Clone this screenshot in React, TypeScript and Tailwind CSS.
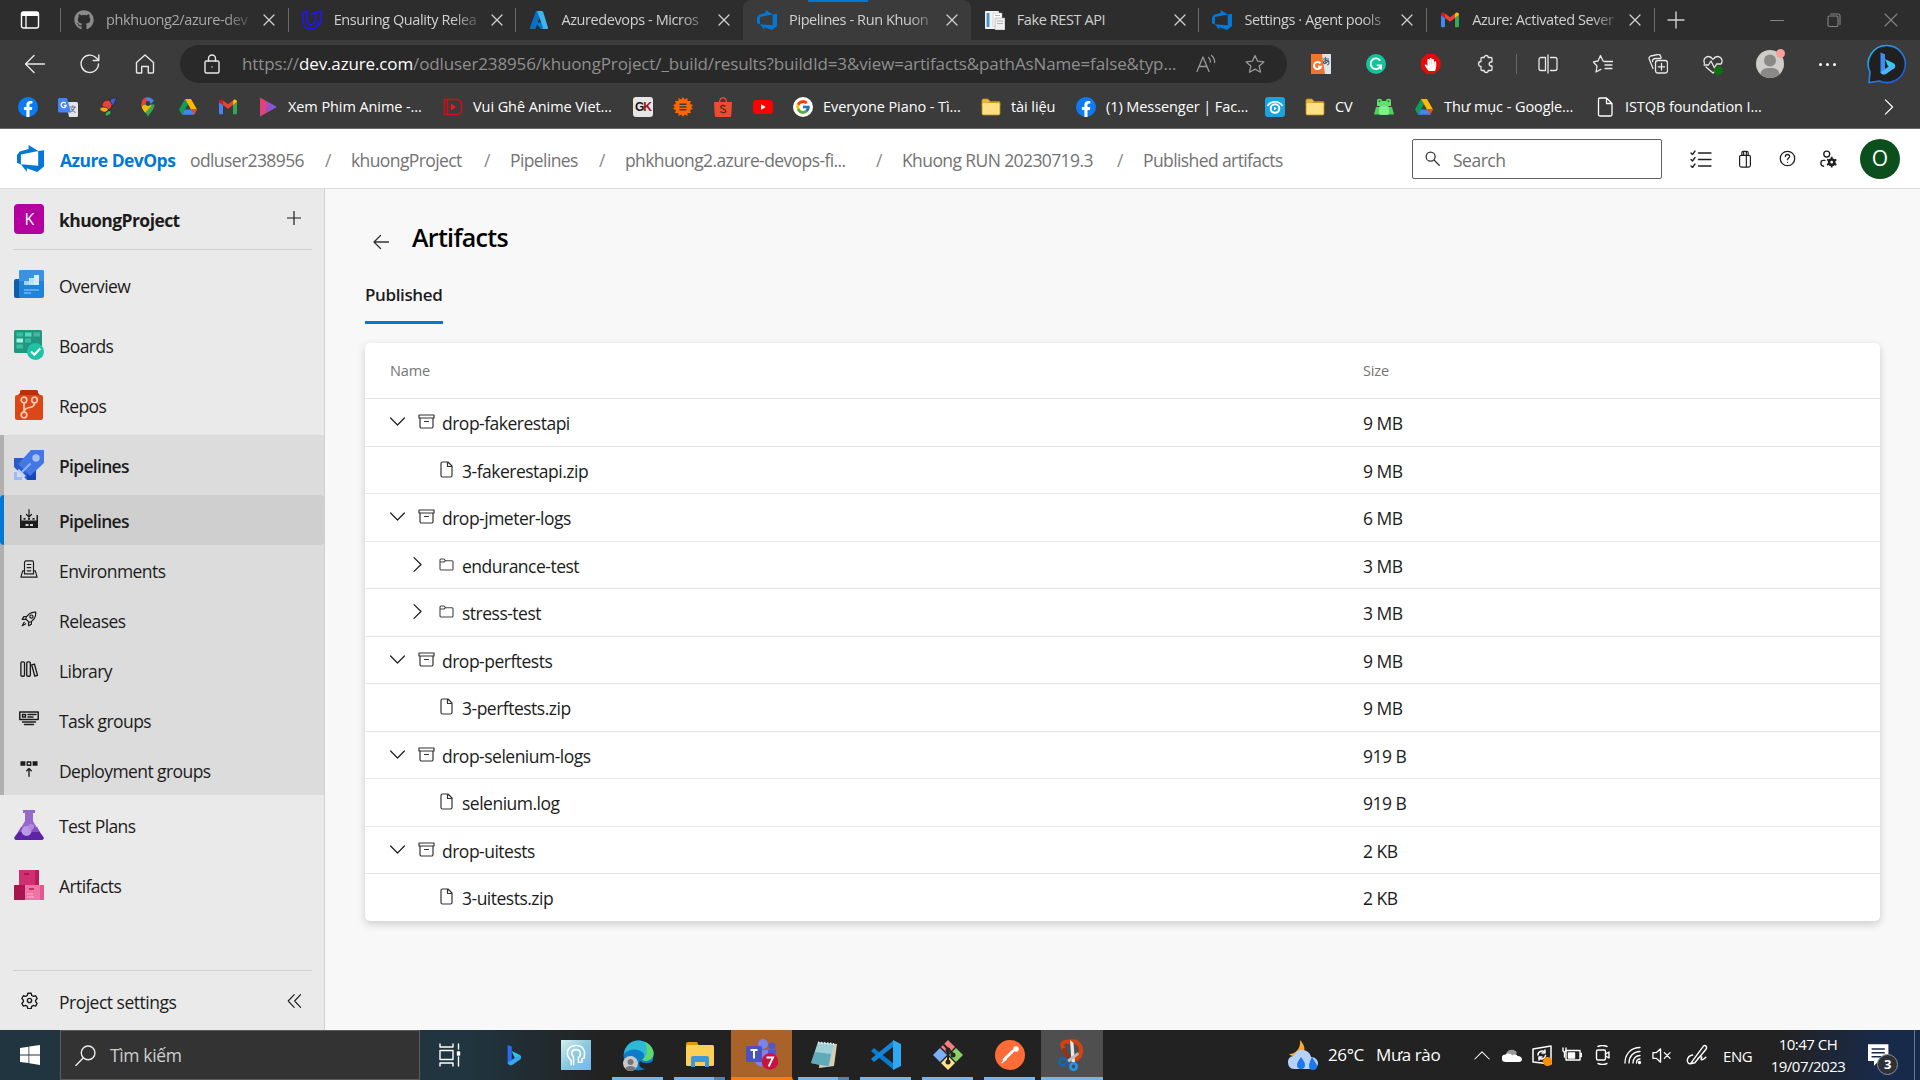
import React from 'react';
import { FaGithub, FaHandPaper } from 'react-icons/fa';
import { FcGoogle } from 'react-icons/fc';

type IconProps = { className?: string; children: React.ReactNode; box?: string; sw?: number };

function Line({ className = 'size-5', children, box = '0 0 20 20', sw = 1.3 }: IconProps) {
  return (
    <svg className={'shrink-0 ' + className} viewBox={box} fill="none" stroke="currentColor" strokeWidth={sw} strokeLinecap="round" strokeLinejoin="round">
      {children}
    </svg>
  );
}

function Art({ className = 'size-5', children, box = '0 0 20 20' }: IconProps) {
  return (
    <svg className={'shrink-0 ' + className} viewBox={box}>
      {children}
    </svg>
  );
}

/* ---------- brand marks ---------- */

const DevOps = ({ className }: { className?: string }) => (
  <Art className={className}>
    <path fill="#0078d7" d="M20 3.8v12.1l-5 4.1-7.7-2.8V20l-4.4-5.7 12.8 1V4.4L20 3.8zM15.8 4.5L8.600 0v2.900L2 4.800 0 7.400v5.800l2.900 1.200V7L15.800 4.500z" />
  </Art>
);

const Gmail = () => (
  <Art className="size-5">
    <path fill="#4285f4" d="M1 5v11a1.3 1.3 0 0 0 1.3 1.3H5V8L1 5z" />
    <path fill="#34a853" d="M15 17.300h2.700A1.300 1.300 0 0 0 19 16V5l-4 3v9.300z" />
    <path fill="#ea4335" d="M5 8V3.500l5 3.800 5-3.800V8l-5 3.800L5 8z" />
    <path fill="#fbbc04" d="M15 3.500V8l4-3V4.700c0-1.900-2-2.700-3.300-1.700L15 3.500z" />
    <path fill="#c5221f" d="M1 5l4 3V3.500L4.300 3C3 2 1 2.800 1 4.700V5z" />
  </Art>
);

const Drive = () => (
  <Art className="size-5">
    <path fill="#0f9d58" d="M7 2L1 12.500l3 5.200L10 7.200z" />
    <path fill="#ffba00" d="M7 2h6l6 10.500h-6z" />
    <path fill="#4285f4" d="M7 12.500h12l-3 5.200H4z" />
    <path fill="#ea4335" d="M13 12.500h6l-3 5.200z" />
  </Art>
);

const Facebook = () => (
  <Art className="size-5">
    <circle cx="10" cy="10" r="10" fill="#0a7cf5" />
    <path fill="#fff" d="M13.900 12.900l.4-2.900h-2.800V8.100c0-.8.400-1.600 1.600-1.600h1.300V4.100s-1.100-.2-2.200-.2c-2.300 0-3.800 1.400-3.800 3.900V10H5.900v2.900h2.500v7h3.100v-7z" />
  </Art>
);

const Folder = () => (
  <Art className="size-5">
    <path fill="#e9b93c" stroke="#b98a12" strokeWidth=".8" d="M1 3.500C1 2.500 1.500 2 2.500 2H7l2 2.500h8.500c1 0 1.500.5 1.500 1.500v2H1z" />
    <rect x="1" y="5.500" width="18" height="12.500" rx="1.500" fill="#ffe082" stroke="#b98a12" strokeWidth=".8" />
    <path fill="#e9b93c" d="M1.400 5.800h5.800L9 4.300H1.400z" />
  </Art>
);

const Translate = () => (
  <Art className="size-5">
    <path fill="#e3e5e8" d="M8 5h10.500A1.500 1.500 0 0 1 20 6.500v12a1.500 1.500 0 0 1-1.500 1.500H11z" />
    <path stroke="#6b7785" strokeWidth="1.100" fill="none" d="M11.500 10h6.500M14.700 8.500V10M16.800 10c-.6 2.500-2.500 4-4.300 5M13 11.500c1 2 2.500 3.300 4.500 4" />
    <path fill="#4285f4" d="M1.500 1H9l4 14.500H1.500A1.500 1.500 0 0 1 0 14V2.500A1.500 1.500 0 0 1 1.500 1z" />
    <path fill="none" stroke="#fff" strokeWidth="1.300" d="M7.700 6.300a2.600 2.600 0 1 0 .6 2.200H5.800" />
  </Art>
);

const Parrot = () => (
  <Art className="size-5">
    <path fill="#3f5bd9" stroke="#222" strokeWidth=".7" d="M11 7L13 1.500 19 .8 15 9z" />
    <path fill="#e8433a" stroke="#222" strokeWidth=".7" d="M4 9C4 4 8 3 11 3l3 4c0 4-3 6-6 6z" />
    <path fill="#f6a623" stroke="#222" strokeWidth=".7" d="M1.500 12c2-3 7-2 9 0-1 4-6 4.500-9 0z" />
    <path fill="#36b257" stroke="#222" strokeWidth=".7" d="M7 18c0-3 3-5 6-4 1 2-2 5.500-6 5z" />
  </Art>
);

const MapPin = () => (
  <Art className="size-5">
    <path fill="#34a853" d="M10 20c-.8-3.500-6.500-7-6.500-12.500h13C16.500 13 10.800 16.500 10 20z" />
    <path fill="#fbbc04" d="M3.600 8.500L10 7l3.500 1.500-6.300 7.200C5.500 13.500 3.800 11.500 3.600 8.500z" />
    <path fill="#4285f4" d="M7.500.6A6.500 6.500 0 0 1 15.800 4L10 9.500 6 6z" />
    <path fill="#ea4335" d="M3.500 7.500C3.300 4 5 1.500 7.700.5L10 3.500 4 9.500z" />
    <circle cx="10" cy="6.500" r="2.400" fill="#3b3b3b" />
  </Art>
);

const PlayMark = () => (
  <Art className="size-5">
    <path fill="#e0427c" d="M2 .5V19.500L18.500 10z" />
    <path fill="#a24dbd" d="M8 4v12l10.500-6z" />
    <path fill="#7a5be0" d="M12 6.300v7.400l6.500-3.700z" />
  </Art>
);

const DMark = () => (
  <Art className="size-5">
    <path fill="none" stroke="#d20f16" strokeWidth="1.500" d="M1.500 2.500h14l3 3v9l-3 3h-14zM4.500 2.500v15" />
    <path fill="#f01a22" d="M8 6.500l5 3.500-5 3.500z" />
  </Art>
);

const GK = () => (
  <span className="flex size-5 items-center justify-center rounded-[3px] bg-[#e6e6e6] font-['Liberation_Sans'] text-[12px] font-bold tracking-[-1px] text-[#151515]">
    G<span className="text-[#9b1520]">K</span>
  </span>
);

const Sun = () => (
  <Art className="size-5">
    <path fill="#f60" d="M10 0l1.700 2.600L14.300 1l.4 3L18 4l-1 3 3 .9L18.200 10l1.800 2.100-3 .9 1 3-3.300 0-.4 3-2.600-1.600L10 20l-1.700-2.600L5.700 19l-.4-3L2 16l1-3-3-.9L1.800 10 0 7.900 3 7 2 4l3.300 0 .4-3 2.600 1.600z" />
    <path stroke="#3b3b3b" strokeWidth="1.400" d="M6.500 7.200h7M6.500 10h7M6.500 12.800h7" />
  </Art>
);

const Shopee = () => (
  <Art className="size-5">
    <path fill="none" stroke="#ee4d2d" strokeWidth="1.300" d="M6.500 6C6.500 2 8 .8 10 .8S13.500 2 13.500 6" />
    <path fill="#ee4d2d" d="M1 5h18l-.8 13.500A1.500 1.500 0 0 1 16.700 20H3.300a1.500 1.500 0 0 1-1.500-1.500z" />
    <path fill="none" stroke="#5b2a20" strokeWidth="1.400" d="M12.500 9.300c-2-1.400-4.700-1-4.700.6 0 2.300 5 1.500 5 4 0 2-3.300 2.300-5.300.6" />
  </Art>
);

const Youtube = () => (
  <Art className="size-5">
    <rect y="3" width="20" height="14" rx="3.500" fill="#f00" />
    <path fill="#fff" d="M8 7.200v5.600l4.700-2.800z" />
  </Art>
);

const GoogleDisc = () => (
  <span className="flex size-5 items-center justify-center rounded-full bg-white">
    <FcGoogle className="size-4" />
  </span>
);

const CyanMark = () => (
  <Art className="size-5">
    <rect width="20" height="20" rx="3" fill="#1aa3dc" />
    <path d="M2.500 9c3-5.500 12-5.500 15 0" fill="none" stroke="#dff3fc" strokeWidth="1.800" />
    <circle cx="10" cy="11.500" r="5.300" fill="#fff" />
    <circle cx="10" cy="11.500" r="3.300" fill="#1aa3dc" />
    <path d="M9 9.800v3.400l2.800-1.700z" fill="#fff" />
  </Art>
);

const Frog = () => (
  <Art className="size-5">
    <path fill="#5fe36a" d="M3 4.500a2.500 2.500 0 0 1 5-.5h4a2.500 2.500 0 0 1 5 .5V9H3z" />
    <path fill="#4fd35c" d="M2 10h16l2 7.500H0z" />
    <rect x="5" y="9" width="10" height="9" rx="2" fill="#7cf285" />
    <circle cx="5.500" cy="4.300" r="1" fill="#2c6b33" />
    <circle cx="14.500" cy="4.300" r="1" fill="#2c6b33" />
  </Art>
);

const PaperFile = () => (
  <Line className="size-5 text-white" sw={1.300}>
    <path d="M3.500 2.500A1.500 1.500 0 0 1 5 1h6.500L17 6.500v11a1.500 1.500 0 0 1-1.500 1.500H5a1.500 1.500 0 0 1-1.500-1.500zM11.500 1v5.500H17" />
  </Line>
);

const Udacity = () => (
  <Line className="size-5 text-[#2015ff]" sw={1.500}>
    <path d="M1 2.500L5 1v8.500c0 3 1.200 4.500 3.500 5.500M1 2.500V11c0 5 3 8 7.500 8S16 16 16 11.500M9.500 4l4-1.500V9c0 3-1 5-5 6M14.500 2.500L19 1v9c0 3-2 5-4 6" />
  </Line>
);

const AzureA = () => (
  <Art className="size-5">
    <path fill="#0a6fc4" d="M7 1h6L6.500 19H2A1.200 1.200 0 0 1 1 17.500z" />
    <path fill="#0078d4" d="M6 12.500h8l2 6.500h-4z" />
    <path fill="#41b4ec" d="M8 1h5a1.200 1.200 0 0 1 1.100.8L19 17.500a1.200 1.200 0 0 1-1 1.500h-5c1 0 1.300-.8 1-1.500z" />
  </Art>
);

const Pages = () => (
  <Art className="size-5">
    <rect x="0" y="1" width="14" height="18" rx="1" fill="#f4f4f4" />
    <rect x="1.500" y="3" width="3" height="14" fill="#4b95cf" />
    <rect x="8" y="3" width="9" height="13" fill="#fff" stroke="#aaa" strokeWidth=".5" />
    <rect x="10" y="8" width="10" height="12" fill="#efefef" stroke="#999" strokeWidth=".5" />
    <path d="M12 11h6M12 13.500h6M10 5.500h5" stroke="#b5b5b5" />
  </Art>
);

const BingB = ({ className = 'size-6' }: { className?: string }) => (
  <Art className={className} box="0 0 24 24">
    <path fill="#2a6df4" d="M5 1l4.500 1.700v15L5 21z" />
    <path fill="#2fc3ee" d="M9.500 7.500l9 4.500c2 1.500 1.500 4-.5 5.500l-5.500-2.700z" />
    <path fill="#37a6f5" d="M5 20.500L17.500 12l1.500 4.500-8.500 6C8 24 5 22.500 5 20.500z" />
  </Art>
);

/* ---------- browser chrome ---------- */

const tabs = [
  { t: 'phkhuong2/azure-dev', icon: <FaGithub className="size-5 text-[#8b8b8b]" />, dim: true },
  { t: 'Ensuring Quality Relea', icon: <Udacity /> },
  { t: 'Azuredevops - Micros', icon: <AzureA /> },
  { t: 'Pipelines - Run Khuon', icon: <DevOps className="size-5" />, active: true },
  { t: 'Fake REST API', icon: <Pages /> },
  { t: 'Settings · Agent pools', icon: <DevOps className="size-5" /> },
  { t: 'Azure: Activated Sever', icon: <Gmail /> },
];

function TabStrip() {
  return (
    <div className="flex h-10 items-center bg-[#2d2d2d] text-[#d0d0d0]">
      <div className="flex w-[60px] justify-center">
        <Art className="size-[20px]">
          <rect x="1.500" y="2" width="17" height="16" rx="2" fill="none" stroke="#fff" strokeWidth="1.400" />
          <path d="M1.500 6V4a2 2 0 0 1 2-2h13a2 2 0 0 1 2 2v2z" fill="#fff" />
          <path d="M6 6v12" stroke="#fff" strokeWidth="1.300" />
        </Art>
      </div>
      {tabs.map((tab, i) => (
        <div
          key={tab.t}
          className={
            'flex h-10 w-[227.7px] shrink-0 items-center ' +
            (tab.active ? 'relative rounded-t-lg bg-[#3b3b3b]' : '')
          }
        >
          {tab.active && <span className="absolute top-0 left-[65px] h-[2px] w-[60px] bg-[#0078d4]" />}
          <span className={'h-6 w-px ' + (i === 3 || i === 4 ? 'bg-transparent' : 'bg-[#6a6a6a]')} />
          <span className="ml-[13px] flex size-5">{tab.icon}</span>
          <span
            className={
              'ml-3 w-[149px] shrink-0 ' +
              (tab.t === 'Fake REST API' ? '' : '[mask-image:linear-gradient(to_right,#000_80%,transparent_101%)] ') +
              'text-[14.500px] tracking-[-0.4px] whitespace-nowrap ' +
              (tab.dim ? 'text-[#a8a8a8]' : '')
            }
          >
            {tab.t}
          </span>
          <Line className="ml-[8px] size-[12px]" box="0 0 12 12" sw={1.300}>
            <path d="M1 1l10 10M11 1L1 11" />
          </Line>
        </div>
      ))}
      <span className="h-6 w-px bg-[#6a6a6a]" />
      <Line className="ml-[12px] size-[18px]" box="0 0 18 18" sw={1.400}>
        <path d="M9 1v16M1 9h16" />
      </Line>
      <div className="ml-auto flex pr-[1px] text-[#858585]">
        <span className="flex w-[57px] justify-center">
          <Line className="size-[14px]" box="0 0 14 14" sw={1}><path d="M.5 7.500h13" /></Line>
        </span>
        <span className="flex w-[57px] justify-center">
          <Line className="size-[14px]" box="0 0 14 14" sw={1.100}><rect x="1" y="3" width="10" height="10.500" rx="1.500" /><path d="M3.500 1h7.500a2 2 0 0 1 2 2v8.500" /></Line>
        </span>
        <span className="flex w-[57px] justify-center">
          <Line className="size-[14px]" box="0 0 14 14" sw={1.100}><path d="M1 1l12 12M13 1L1 13" /></Line>
        </span>
      </div>
    </div>
  );
}

const tools = [
  <Art className="size-5"><path fill="#f0742c" d="M0 0h14v20H0z" /><path fill="#e2e5e7" d="M11 0h9v20h-6z" /><path fill="none" stroke="#fff" strokeWidth="2" d="M9.500 9.300a3.600 3.600 0 1 0 .5 3.500H7" /><path fill="none" stroke="#46607a" strokeWidth="1.100" d="M12 5h6M14.500 3v7M17 6c0 3-4.500 5-4.500 2.500S18 6 18 8.500 17 10.500 16 11" /></Art>,
  <Art className="size-5"><circle cx="10" cy="10" r="10" fill="#15c39a" /><path fill="none" stroke="#fff" strokeWidth="1.800" strokeLinecap="round" d="M13.700 6A5.300 5.300 0 1 0 15 11.300h-3.500M15 11.300v3.500" /></Art>,
  <span className="relative flex size-5 items-center justify-center bg-[#e30b0b] [clip-path:polygon(30%_0,70%_0,100%_30%,100%_70%,70%_100%,30%_100%,0_70%,0_30%)]"><FaHandPaper className="size-[13px] text-white" /></span>,
  <Line><path d="M6 3.500h2.200a2 2 0 1 1 4 0H15a1 1 0 0 1 1 1V8h-.8a2 2 0 1 0 0 4h.8v3.500a1 1 0 0 1-1 1h-2.800a2 2 0 1 1-4 0H6a1 1 0 0 1-1-1V12.500a2.500 2.500 0 1 1 0-5v-3a1 1 0 0 1 1-1z" /></Line>,
];

const tools2 = [
  <Line><path d="M7.500 3.500H3a2 2 0 0 0-2 2v9a2 2 0 0 0 2 2h4.500zM12.500 3.500H17a2 2 0 0 1 2 2v9a2 2 0 0 1-2 2h-4.500M10 1v18" /></Line>,
  <Line><path d="M12 7.500l-1.800-.3L7.500 1.500 5 7l-5 .8 4 4.200-1 6 4.800-2.600M12 7.500h8M12 11h7M12 14.500h7" /></Line>,
  <Line><rect x="7.500" y="6.500" width="12" height="12.500" rx="2.500" /><path d="M13.500 9.500v6.500M10.200 12.800h6.500M5 14.500L1.200 5A2.500 2.500 0 0 1 2.700 2l7-1.500c1.500-.3 2.600.3 3 2l.5 1.500M4.500 7.500c0-2 1-3 3-3h5" /></Line>,
  <span className="relative"><Line><path d="M1.500 9.500C0 6 2 2.500 5.300 2.500c2 0 3.500 1 4.700 2.800C11.200 3.500 12.700 2.500 14.700 2.500 18 2.500 20 6 18.500 9.500M3 13l7 6 3-2.700M1 11h4.500L8 7l3.500 7 2-4H18" /></Line><span className="absolute top-[12px] left-[11px] size-[9px] rounded-full bg-[#0e700e]" /></span>,
];

function Toolbar() {
  return (
    <div className="flex h-[48px] items-center text-[#e8e8e8]">
      <div className="flex w-[172px] pl-[8px]">
        <span className="flex w-[55px] justify-center"><Line sw={1.400}><path d="M19.500 10H.8M9 1.500L.5 10 9 18.500" /></Line></span>
        <span className="flex w-[55px] justify-center"><Line sw={1.400}><path d="M18.500 10A8.700 8.700 0 1 1 15.800 3.500L18.500 6M18.800 1v5.500h-5.500" /></Line></span>
        <span className="flex w-[55px] justify-center"><Line sw={1.400}><path d="M1.500 8.500L10 1l8.500 7.500V18a1 1 0 0 1-1 1h-4.200v-6.500H6.700V19H2.500a1 1 0 0 1-1-1z" /></Line></span>
      </div>
      <div className="ml-[8px] flex h-[38px] w-[1107px] items-center rounded-full bg-[#292929]">
        <Line className="ml-[22px] size-5" sw={1.400}><rect x="3" y="7" width="14" height="12" rx="1.500" /><path d="M6.500 7V4.500a3.500 3.500 0 0 1 7 0V7M10 13h.01" /></Line>
        <span className="ml-5 w-[944px] text-[17px] tracking-[-0.130px] whitespace-nowrap text-[#8f8f8f]">
          https://<span className="text-white">dev.azure.com</span>/odluser238956/khuongProject/_build/results?buildId=3&amp;view=artifacts&amp;pathAsName=false&amp;typ...
        </span>
        <Line className="ml-[10px] size-5 text-[#999]"><path d="M1 17.500L7 3l6 14.500M3.200 12.500h7.600M12.500 3.500c1.400 1 2 2.500 2 4.500M15.500 1.500c2.200 1.700 3.200 4 3.200 7" /></Line>
        <Line className="ml-[29px] size-5 text-[#999]"><path d="M10 1.500l2.600 5.700 6.200.7-4.600 4.200 1.300 6.100L10 15.100l-5.500 3.100 1.300-6.100L1.200 7.900l6.200-.7z" /></Line>
      </div>
      <div className="ml-[6px] flex items-center">
        {tools.map((t, i) => <span key={i} className="flex w-[55px] justify-center">{t}</span>)}
        <span className="ml-[3px] h-5 w-px bg-[#666]" />
        <span className="ml-[3px] flex">{tools2.map((t, i) => <span key={i} className="flex w-[55px] justify-center">{t}</span>)}</span>
        <span className="flex w-[59px] justify-center">
          <span className="relative">
            <Art className="size-7" box="0 0 28 28"><circle cx="14" cy="14" r="14" fill="#cfcdca" /><circle cx="14" cy="10.500" r="6" fill="#8b8987" /><path d="M4.500 24.300C5 19 9 18 14 18s9 1 9.500 6.300A14 14 0 0 1 14 28a14 14 0 0 1-9.500-3.700z" fill="#8b8987" /></Art>
            <span className="absolute -top-[1px] left-[20px] size-[9px] rounded-full bg-[#f8a09b]" />
          </span>
        </span>
        <span className="flex w-[57px] justify-center gap-[4px]">
          <i className="size-[3px] rounded-full bg-white" /><i className="size-[3px] rounded-full bg-white" /><i className="size-[3px] rounded-full bg-white" />
        </span>
        <span className="ml-[11px] flex w-[40px] justify-center">
          <svg className="size-[40px]" viewBox="0 0 40 40">
            <defs><linearGradient id="bing" x1="0" y1="0" x2="1" y2="1"><stop offset="0" stopColor="#29b7f5" /><stop offset="1" stopColor="#1a4ee0" /></linearGradient></defs>
            <path d="M20 1.500A18.500 18.500 0 1 1 12.500 37L2 38.500 3 28A18.500 18.500 0 0 1 20 1.500z" fill="#202020" stroke="url(#bing)" strokeWidth="1.600" />
            <g transform="translate(8.500 7.500)"><path fill="#3a8df5" d="M5 1l4.500 1.700v15L5 21z" /><path fill="#2fd0ea" d="M9.500 7.500l9 4.500c2 1.500 1.500 4-.5 5.500l-5.500-2.700z" /><path fill="#4fb4fa" d="M5 20.500L17.500 12l1.500 4.500-8.500 6C8 24 5 22.500 5 20.500z" /></g>
          </svg>
        </span>
      </div>
    </div>
  );
}

const bookmarks: { icon: React.ReactNode; t?: string; w?: string }[] = [
  { icon: <Facebook /> },
  { icon: <Translate /> },
  { icon: <Parrot /> },
  { icon: <MapPin /> },
  { icon: <Drive /> },
  { icon: <Gmail /> },
  { icon: <PlayMark />, t: 'Xem Phim Anime -...', w: 'w-[145px]' },
  { icon: <DMark />, t: 'Vui Ghê Anime Viet...', w: 'w-[150px]' },
  { icon: <GK /> },
  { icon: <Sun /> },
  { icon: <Shopee /> },
  { icon: <Youtube /> },
  { icon: <GoogleDisc />, t: 'Everyone Piano - Tì...', w: 'w-[148px]' },
  { icon: <Folder />, t: 'tài liệu', w: 'w-[55px]' },
  { icon: <Facebook />, t: '(1) Messenger | Fac...', w: 'w-[149px]' },
  { icon: <CyanMark /> },
  { icon: <Folder />, t: 'CV', w: 'w-[29px]' },
  { icon: <Frog /> },
  { icon: <Drive />, t: 'Thư mục - Google...', w: 'w-[141px]' },
  { icon: <PaperFile />, t: 'ISTQB foundation I...', w: 'w-[150px]' },
];

function Bookmarks() {
  return (
    <div className="flex h-[41px] items-center border-b border-[#6b6b6b] pb-[3px] pl-2 text-[14.500px] tracking-[-0.08px] text-white">
      {bookmarks.map((b, i) => (
        <React.Fragment key={i}>
          <span className="flex w-10 shrink-0 justify-center">{b.icon}</span>
          {b.t && <span className={'shrink-0 whitespace-nowrap ' + b.w}>{b.t}</span>}
        </React.Fragment>
      ))}
      <Line className="mr-[22px] ml-auto size-[18px]"><path d="M6 2l8 8-8 8" /></Line>
    </div>
  );
}

/* ---------- Azure DevOps page ---------- */

const crumbs = [
  { t: 'odluser238956', w: 'w-[115px]' },
  { t: 'khuongProject', w: 'w-[113px]' },
  { t: 'Pipelines', w: 'w-[69px]' },
  { t: 'phkhuong2.azure-devops-fi...', w: 'w-[231px]' },
  { t: 'Khuong RUN 20230719.3', w: 'w-[195px]' },
  { t: 'Published artifacts', w: 'w-[150px]' },
];

function Header() {
  return (
    <header className="flex h-[60px] shrink-0 items-center border-b border-[#dedede] bg-white">
      <DevOps className="ml-[17px] size-[27px]" />
      <span className="ml-4 w-[130px] pt-[3px] text-[17.500px] font-bold tracking-[-0.55px] whitespace-nowrap text-[#0078d4]">Azure DevOps</span>
      <nav className="flex pt-[3px] text-[17.500px] tracking-[-0.6px] whitespace-nowrap text-[#737373]">
        {crumbs.map((c, i) => (
          <React.Fragment key={c.t}>
            {i > 0 && <span className="w-[46px] text-center text-[#8a8a8a]">/</span>}
            <span className={c.w}>{c.t}</span>
          </React.Fragment>
        ))}
      </nav>
      <div className="ml-auto flex h-10 w-[250px] items-center rounded-[2px] border border-[#5f5f5f] text-[17.500px] tracking-[-0.5px] text-[#707070]">
        <Line className="ml-[12px] size-[15px] text-[#333]" sw={1.700}><circle cx="7.500" cy="7.500" r="6" /><path d="M12 12l7 7" /></Line>
        <span className="ml-[13px] pt-[3px]">Search</span>
      </div>
      <div className="ml-[17px] flex text-[#1f1f1f]">
        <span className="flex w-[44px] justify-center"><Line className="h-[18px] w-[22px]" box="0 0 22 18"><path d="M8.500 3H21M8.500 9.500H21M8.500 16H21M1 3l1.500 1.500L5 1M1 9.500L2.500 11 5 7.500M1 16l1.500 1.500L5 14" /></Line></span>
        <span className="flex w-[43px] justify-center"><Line className="size-[18px]"><path d="M5.500 6h9a1.500 1.500 0 0 1 1.500 1.500V17a2 2 0 0 1-2 2H6a2 2 0 0 1-2-2V7.500A1.500 1.500 0 0 1 5.500 6zM6.500 6V3A1.500 1.500 0 0 1 8 1.500h4A1.500 1.500 0 0 1 13.500 3v3M8.500 6V2M11.500 2v17" /></Line></span>
        <span className="flex w-[42px] justify-center"><Line className="size-[17px]" sw={1.500}><circle cx="10" cy="10" r="8.500" /><path d="M7.500 7.700C7.500 6.200 8.600 5.300 10 5.300s2.500.9 2.500 2.300c0 1.700-2.500 1.900-2.500 4M10 14.500h.01" /></Line></span>
        <span className="flex w-[42px] justify-center"><Line className="size-[18px]" sw={1.500}><circle cx="7.500" cy="4.500" r="3.300" /><path d="M4 18c-2 0-3-1.500-3-3.500 0-1.800 1-3 2.500-3h2" /><circle cx="13" cy="13.500" r="2.900" strokeWidth="2.800" /><path strokeWidth="2" strokeLinecap="butt" d="M13 7.500v3M13 16.500v3M7.800 10.500l2.600 1.500M15.600 15l2.600 1.500M7.800 16.500l2.600-1.500M15.600 12l2.600-1.500" /></Line></span>
      </div>
      <span className="mr-5 ml-[10px] flex size-10 items-center justify-center rounded-full bg-[#0b4f1d] text-[21px] text-white">O</span>
    </header>
  );
}

const overview = <Art className="size-[30px]" box="0 0 30 30"><rect y="9" width="14" height="19" rx="2" fill="#0f5fa8" /><rect x="5" width="25" height="28" rx="2" fill="#1f83da" /><path d="M5 2a2 2 0 0 1 2-2h21a2 2 0 0 1 2 2v9H5z" fill="#3c92de" /><path fill="#9fd4fb" d="M10 11h5v4h-5z" /><path fill="#b9e0fd" d="M15 8h5v7h-5z" /><path fill="#d4ecff" d="M20 5h5v10h-5z" /><path stroke="#6fb6ef" strokeWidth="1.300" d="M10 20h15M10 23h7" /></Art>;
const boards = <Art className="size-[30px]" box="0 0 30 30"><rect width="28" height="23" rx="1.500" fill="#249680" /><path fill="#37bd9f" d="M2.500 2.500H9v4H2.500zM19.500 2.500H26v4h-6.500zM11 8.500h6v4h-6zM2.500 14.500H9v4H2.500z" /><path fill="#55d9bd" d="M11 2.500h6.500v4H11z" /><path fill="#9ff5e3" d="M2.500 8.500H9v4H2.500z" /><circle cx="21.500" cy="21.500" r="8.500" fill="#1cc3a4" /><path d="M17 21.500l3.300 3.300 6-6.300" fill="none" stroke="#fff" strokeWidth="2.200" /></Art>;
const repos = <Art className="size-[30px]" box="0 0 30 30"><path fill="#b92f06" d="M6 1.500A1.500 1.500 0 0 1 7.500 0h15A1.500 1.500 0 0 1 24 1.500V3l2 2H4l2-2z" /><rect x="1" y="5" width="28" height="25" rx="2" fill="#dc4717" /><g fill="none" stroke="#ffc9b5" strokeWidth="1.700"><circle cx="10" cy="10" r="2.800" /><circle cx="20.500" cy="10" r="2.800" /><circle cx="10" cy="25" r="2.800" /><path d="M10 13v9M20.500 13c0 3-2 4-5 4.500s-5 1.500-5.500 4" /></g></Art>;
const pipelines = <Art className="size-[30px]" box="0 0 30 30"><path fill="#2a5bcb" d="M0 8h15l7 9v13h-9L0 17z" /><path fill="#1648b8" d="M13 21l9-9v17l-1.500 1H13z" /><path fill="#4277e6" d="M17 0h13v13L16 26 7 17 4 14z" /><circle cx="22" cy="8" r="3.700" fill="#a8c2f8" /><path stroke="#90b0f5" strokeWidth="2.200" d="M16.500 13.500L8 22" /><path fill="#c2d3fb" d="M5 19l7 7-3 2-6-7z" /><path fill="#9db9f7" d="M0 22h3v5h5v3H0z" /></Art>;
const testPlans = <Art className="size-[30px]" box="0 0 30 30"><path fill="#9569c9" d="M9 0h12v3h-2v8l6 10H5l6-10V3H9z" /><path fill="#5f23a5" d="M5 21h20l4.500 6a2 2 0 0 1-1.700 3H2.200a2 2 0 0 1-1.700-3z" /><path fill="#844fc0" d="M7 17h16l3 5H4z" /><circle cx="12.500" cy="21" r="5" fill="#bb98e4" /><circle cx="17" cy="17" r="3" fill="#b389df" /></Art>;
const artifacts = <Art className="size-[30px]" box="0 0 30 30"><path fill="#d22e72" d="M5 0h20v15H5z" /><path fill="#b91b59" d="M21 0h4v15h-4z" /><path fill="#a81650" d="M0 15h11v15H0z" /><path fill="#ef73a4" d="M11 15h19v15H11z" /><path fill="#e05a92" d="M26 15h4v15h-4z" /><path fill="#ab1853" d="M10 3h5v2h-5zM6 18h4v2H6z" /><path fill="#cc2c6d" d="M15 18h5v2h-5z" /><path stroke="#f89dc0" strokeWidth="1.400" d="M13 24h6M13 27h7" /></Art>;

const subItems = [
  { t: 'Pipelines', icon: <Line className="size-5"><path d="M10 .7v7M7.500 5.500L10 8l2.500-2.500" strokeWidth="1.200" /><path fill="currentColor" stroke="none" d="M1 6h1.500v5.500h15V6H19v13H1z" /><path fill="#cfcfcf" stroke="none" d="M6.500 15h3v2h-3zM11 15h3v2h-3z" /><path strokeWidth="1.800" strokeLinecap="butt" d="M4.500 9.800h2M9 9.800h2M13.500 9.800h2" /></Line> },
  { t: 'Environments', icon: <Line className="size-[18px]"><path d="M5 15.500V2.500A1.500 1.500 0 0 1 6.500 1h7A1.500 1.500 0 0 1 15 2.500v13zM5 12H3l-2 7h18l-2-7h-2M8 5h4M8 8.500h4M8 12h4" /></Line> },
  { t: 'Releases', icon: <Line className="size-4" sw={1.500}><path d="M6 10C7 5 12 1 18.500 1.500 19 8 15 13 10 14zM6 10l4 4M7 7H3.500L1.500 10.500 6 10.500M13 13v3.500L9.500 18.500v-4.500M4 14l-2.500 4.500L6 16" /><circle cx="13" cy="7" r="2" /></Line> },
  { t: 'Library', icon: <Line className="size-[18px]" sw={1.500}><rect x="1" y="2" width="4" height="16" rx="1.300" /><rect x="7.500" y="2" width="4" height="16" rx="1.300" /><path d="M13 5.500l3-1 3.500 12.500-3 1z" /></Line> },
  { t: 'Task groups', icon: <Line className="size-5" sw={1.500}><path d="M.8 3h18.400v7.500H.8zM3.500 5.500h3v2.500h-3zM9 5.500h8M9 8h5M3.500 13h13M5.500 15.500h9" /></Line> },
  { t: 'Deployment groups', icon: <Line className="size-[18px]" sw={1.300}><path fill="currentColor" stroke="none" d="M.5 1.500H6v5H.5zM14 1.500h5.500v5H14z" /><path d="M8 2.200h4v3.600H8zM10 18v-8M7.500 12L10 9.500l2.500 2.500" strokeWidth="1.500" /></Line> },
];

function NavItem({ icon, label, bold }: { icon: React.ReactNode; label: string; bold?: boolean }) {
  return (
    <div className={'flex h-[60px] items-center pl-[14px] ' + (bold ? 'font-semibold' : '')}>
      {icon}
      <span className={'ml-[15px] pt-[3px] ' + (bold ? 'tracking-[-0.7px]' : '')}>{label}</span>
    </div>
  );
}

function Sidebar() {
  return (
    <aside className="flex w-[325px] shrink-0 flex-col border-r border-[#cfcfcf] bg-[#eaeaea] text-[17.500px] tracking-[-0.58px] text-[#1c1c1c]">
      <div className="flex h-[60px] shrink-0 items-center pl-[14px]">
        <span className="flex size-[30px] items-center justify-center rounded bg-[#b4009e] text-[16px] text-white">K</span>
        <span className="ml-[15px] w-[228px] pt-[3px] font-bold">khuongProject</span>
        <Line className="-mt-[2px] size-[14px]" box="0 0 14 14" sw={1.200}><path d="M7 .5v13M.5 7h13" /></Line>
      </div>
      <div className="mx-[13px] mb-[5px] h-px w-[299px] shrink-0 bg-[#d0d0d0]" />
      <NavItem icon={overview} label="Overview" />
      <NavItem icon={boards} label="Boards" />
      <NavItem icon={repos} label="Repos" />
      <div className="border-l-4 border-[#b0b0b0] bg-[#dcdcdc]">
        <div className="-ml-1"><NavItem icon={pipelines} label="Pipelines" bold /></div>
        {subItems.map((s, i) => (
          <div
            key={s.t}
            className={'-ml-1 flex h-[50px] items-center ' + (i === 0 ? 'rounded border-l-4 border-[#0078d4] bg-[#cfcfcf] pl-[10px] font-semibold tracking-[-0.7px]' : 'pl-[14px]')}
          >
            <span className="-mt-[3px] flex w-[30px] justify-center">{s.icon}</span>
            <span className="ml-[15px] pt-[3px]">{s.t}</span>
          </div>
        ))}
      </div>
      <NavItem icon={testPlans} label="Test Plans" />
      <NavItem icon={artifacts} label="Artifacts" />
      <div className="mx-[13px] mt-auto h-px w-[299px] shrink-0 bg-[#d0d0d0]" />
      <div className="flex h-[59px] shrink-0 items-center pl-[14px]">
        <span className="flex w-[30px] justify-center">
          <Line className="size-[17px]" sw={1.600}><circle cx="10" cy="10" r="2.500" /><path d="M8 1.500h4l.6 2.600 2 1.100 2.600-.8 1.800 3.300-1.800 1.900v1.900l1.800 1.900-1.800 3.200-2.600-.8-2 1.200-.6 2.500H8l-.6-2.500-2-1.200-2.600.8L1 13.400l1.800-1.900V9.600L1 7.700l1.800-3.300 2.600.8 2-1.100z" /></Line>
        </span>
        <span className="ml-[15px] w-[228px] pt-[4px] tracking-[-0.5px]">Project settings</span>
        <Line className="size-[16px]" sw={1.400}><path d="M9 2L1.500 10 9 18M17 2l-7.500 8 7.500 8" /></Line>
      </div>
    </aside>
  );
}

const rows: [kind: 'drop' | 'file' | 'dir', name: string, size: string][] = [
  ['drop', 'drop-fakerestapi', '9 MB'],
  ['file', '3-fakerestapi.zip', '9 MB'],
  ['drop', 'drop-jmeter-logs', '6 MB'],
  ['dir', 'endurance-test', '3 MB'],
  ['dir', 'stress-test', '3 MB'],
  ['drop', 'drop-perftests', '9 MB'],
  ['file', '3-perftests.zip', '9 MB'],
  ['drop', 'drop-selenium-logs', '919 B'],
  ['file', 'selenium.log', '919 B'],
  ['drop', 'drop-uitests', '2 KB'],
  ['file', '3-uitests.zip', '2 KB'],
];

function Rows() {
  return rows.map(([kind, name, size]) => (
    <div key={name} className="flex h-[47.5px] items-center border-t border-[#e6e6e6] text-[17.500px] tracking-[-0.5px] text-[#1c1c1c]">
      <div className={'flex w-[998px] items-center ' + (kind === 'drop' ? 'pl-[25px]' : 'pl-[45px]')}>
        <span className="-mt-[1px] flex w-[15px] justify-center">
          {kind === 'drop' && <Line className="h-[9px] w-[15px]" box="0 0 15 9" sw={1.200}><path d="M.6 1l6.900 7L14.400 1" /></Line>}
          {kind === 'dir' && <Line className="h-[15px] w-[9px]" box="0 0 9 15" sw={1.200}><path d="M1 .6l7 6.900-7 6.900" /></Line>}
        </span>
        <span className="-mt-[1px] ml-[13px] flex w-[17px] justify-center">
          {kind === 'drop' && <Line className="h-[15px] w-[17px] text-[#333]" box="0 0 17 15" sw={1.200}><path d="M1 1h15v3H1zM2 4v8.500A1.500 1.500 0 0 0 3.500 14h10a1.500 1.500 0 0 0 1.500-1.500V4M6.500 7.500h4" /></Line>}
          {kind === 'file' && <Line className="h-[17px] w-[13px] text-[#333]" box="0 0 13 17" sw={1.200}><path d="M1 2.500A1.500 1.500 0 0 1 2.500 1H8l4 4v9.500a1.500 1.500 0 0 1-1.500 1.500h-8A1.500 1.500 0 0 1 1 14.500zM7.500 1v4.500H12" /></Line>}
          {kind === 'dir' && <Line className="h-[13px] w-[15px] text-[#444]" box="0 0 15 13" sw={1.100}><path d="M1 2a1 1 0 0 1 1-1h3l1.500 1.700H13a1 1 0 0 1 1 1V11a1 1 0 0 1-1 1H2a1 1 0 0 1-1-1zM1 4h4l1.500-1.300" /></Line>}
        </span>
        <span className="ml-[7px] pt-[2px]">{name}</span>
      </div>
      <span className="pt-[2px]">{size}</span>
    </div>
  ));
}

function Main() {
  return (
    <main className="flex-1 bg-[#f8f8f8] pl-[40px]">
      <div className="flex h-[72px] items-end pb-[6px]">
        <Line className="mb-[5px] ml-[8px] size-4 text-[#333]" box="0 0 16 16" sw={1.300}><path d="M15.500 8H1M7.500 1.500L1 8l6.500 6.500" /></Line>
        <h1 className="ml-[23px] text-[25px] leading-[36px] font-semibold tracking-[-0.7px] text-black">Artifacts</h1>
      </div>
      <div className="mt-[9px] flex h-[54px] w-[78px] items-start border-b-[3px] border-[#0078d4] pt-[12px] text-[17px] font-semibold tracking-[-0.370px] whitespace-nowrap text-[#1c1c1c]">
        Published
      </div>
      <div className="mt-[19px] w-[1515px] overflow-hidden rounded-[5px] bg-white shadow-[0_3px_9px_rgba(0,0,0,0.18)]">
        <div className="flex h-[55px] items-center text-[14.500px] tracking-[-0.15px] text-[#757575]">
          <span className="w-[998px] pl-[25px] font-medium">Name</span>
          <span className="font-medium">Size</span>
        </div>
        <Rows />
      </div>
    </main>
  );
}

/* ---------- Windows taskbar ---------- */

const Bar = ({ split }: { split?: boolean }) => (
  <span className="absolute bottom-0 left-[5px] flex h-[3px] w-[51px] bg-[#76b4ec]">
    {split && <i className="ml-auto w-[11px] bg-[#5580a8]" />}
  </span>
);

const teams = <Art className="size-8" box="0 0 32 32"><circle cx="17" cy="6" r="5" fill="#7b83eb" /><circle cx="26" cy="8" r="3.500" fill="#5059c9" /><path fill="#7b83eb" d="M9 12h15v10a8 8 0 0 1-15 2z" /><path fill="#5059c9" d="M22 12h8v9a5 5 0 0 1-8 3z" /><rect x="0" y="8" width="16" height="16" rx="1.500" fill="#4b53bc" /><path stroke="#fff" strokeWidth="2" d="M4.500 12h7M8 12v8.500" /><circle cx="24" cy="23.500" r="8.300" fill="#c4153f" /><path stroke="#fff" strokeWidth="1.900" fill="none" d="M20.500 19.500h6.500l-4.300 9" /></Art>;

const apps = [
  { icon: <Line className="size-6 text-white" box="0 0 24 24" sw={1.400}><path d="M2 1v3h13V1M2 23v-3h13v3M2 7.500h13v9H2zM20.500 1v5M20.500 14v9" /><rect x="19.500" y="9" width="2" height="3" fill="currentColor" /></Line> },
  { icon: <BingB className="size-[22px]" /> },
  { icon: <span className="flex size-[30px] items-center justify-center bg-gradient-to-br from-[#d5f0ee] via-[#8cc9dd] to-[#76b7f0]"><Line className="size-6 text-white"><path d="M6 18v-3.500C3 12 2.500 9 3 7c1-6 12-7 14 0 .5 2.500-.5 3.500 0 5.500l-2 .5v3h-3v-4c3-2 2-6.500-2-6.500S5.500 9 8 12v6" /></Line></span> },
  {
    icon: <span className="relative"><Art className="size-[31px]" box="0 0 31 31"><circle cx="15.500" cy="15.500" r="15" fill="#0d7cc9" /><path fill="#2fb9d9" d="M1 14C2 5 9 0 16 .5c9 .5 15 7 14.500 13.500C30 20 24 22 19 20c3-2 3-6 0-8-5-4-14-3-18 2z" /><path fill="#5fda6a" d="M22 2c6 3 9 8 8.500 12-.5 5.500-6 8-11.500 6 4-3 7-8 3-18z" /><path fill="#222" d="M17 21c4 3 9 2.500 12.500.5C28 25 25 28 22 29c-5-1-7-4-5-8z" /></Art><Art className="absolute top-[16px] left-0 size-[15px]"><circle cx="10" cy="10" r="10" fill="#c9c9c9" /><circle cx="10" cy="8" r="4" fill="#777" /><path d="M3 17c1-5 13-5 14 0-4 4-10 4-14 0z" fill="#777" /></Art></span>,
    bar: true,
  },
  { icon: <Art className="size-[28px]" box="0 0 28 28"><path fill="#dd9b05" d="M0 3a2 2 0 0 1 2-2h9l2 4H0z" /><rect y="4" width="28" height="21" rx="1.500" fill="#fccf55" /><path fill="#3d97d8" d="M5 26V17a2 2 0 0 1 2-2h14a2 2 0 0 1 2 2v9h-4v-5H9v5z" /></Art>, bar: true, split: true },
  { icon: teams, hot: true },
  { icon: <Art className="size-[30px]" box="0 0 30 30"><path fill="#d9cfb0" d="M12 3l16 1-3 22-15 2z" /><path fill="#9fd0da" d="M9 2l16 2-5 23L2 23z" /><path fill="#3f97a8" d="M6 12l16 2-2.500 12.500L2 23z" opacity=".65" /><path stroke="#eee" strokeWidth="2" strokeDasharray="1.500 1.500" d="M9 2.500l16 1.500" /></Art>, bar: true, split: true },
  { icon: <Art className="size-[30px]" box="0 0 30 30"><path fill="#0a7acc" d="M0 11l3-3 20 16v6L1 12z" /><path fill="#1485d6" d="M0 19l3 3L23 6V0L1 18z" /><path fill="#2ea8f3" d="M22 0l8 4v22l-8 4z" /><path fill="#222" d="M22 9v12l-8-6z" /></Art>, bar: true },
  { icon: <Art className="size-[30px]" box="0 0 30 30"><path fill="#f77f7f" d="M15 0l7 7-7 7-7-7z" /><path fill="#7db0f8" d="M7 8l7 7-7 7-7-7z" /><path fill="#88d164" d="M23 8l7 7-7 7-7-7z" /><path fill="#fbe38a" d="M15 16l7 7-7 7-7-7z" /><path stroke="#262626" strokeWidth="2" d="M10 4l5 5v13M15 9l5 5" fill="none" /><circle cx="15" cy="10" r="2.500" fill="#262626" /><circle cx="20" cy="15" r="2.500" fill="#262626" /><circle cx="15" cy="22" r="2.500" fill="#262626" /></Art>, bar: true },
  { icon: <Art className="size-[30px]" box="0 0 30 30"><circle cx="15" cy="15" r="15" fill="#ff6c37" /><path stroke="#fff" strokeWidth="2.800" strokeLinecap="round" d="M9 19.500l9-8.500" /><circle cx="21" cy="9" r="2.800" fill="#fff" /><path stroke="#fff" strokeWidth="1.200" d="M6.500 23l5-4" /></Art>, bar: true },
  { icon: <Art className="size-[32px]" box="0 0 32 32"><path fill="none" stroke="#d8400f" strokeWidth="4" d="M8 10C4 5 7 2 13 3M13 2.500c8-2 13 4 12 11-1 5-4 7-7 7" /><path fill="none" stroke="#a82c08" strokeWidth="3" d="M8 9c0 4 2 7 5 9" /><path fill="#e8e8e8" d="M14 1l3.500 3 1.500 19h-3.500z" /><path fill="#bdbdbd" d="M22 13l-11 8 2 2.500 10-8z" /><circle cx="7" cy="23" r="3.600" fill="none" stroke="#1565b0" strokeWidth="2.600" /><circle cx="17.500" cy="27.500" r="3.200" fill="none" stroke="#2196f3" strokeWidth="2.600" /></Art>, open: true },
];

function Taskbar() {
  return (
    <footer className="flex h-[50px] shrink-0 bg-[linear-gradient(to_right,#20353f_0,#20353f_470px,#222_600px,#222_1780px,#182a4a_1880px,#182a4a_100%)] text-white">
      <div className="flex w-[60px] items-center justify-center">
        <Art className="size-5"><path fill="#fff" d="M0 3l8.500-1.200v7.700H0zM9.300 1.600L20 0v9.500H9.300zM0 10.400h8.500v7.700L0 17zM9.300 10.400H20V20L9.300 18.300z" /></Art>
      </div>
      <div className="flex w-[360px] items-center border border-[#5c5c5c] bg-[#333]">
        <Line className="ml-[14px] size-[21px] text-[#eee]" sw={1.300}><circle cx="12.500" cy="7.500" r="6.500" /><path d="M8 12.200L.8 19.500" /></Line>
        <span className="ml-[14px] text-[17.500px] tracking-[-0.370px] text-[#cfcfcf]">Tìm kiếm</span>
      </div>
      <div className="flex">
        {apps.map((a, i) => (
          <span
            key={i}
            className={
              'relative flex items-center justify-center ' +
              (i === 0 ? 'w-[62px] pr-[2px] ' : i === 1 ? 'w-[63px] ' : 'w-[62px] ') +
              (a.hot ? 'border-r border-[#222] border-b-[3px] border-b-[#ff7b0d] bg-[#a8622a]' : '') +
              (a.open ? 'bg-[#4f4f4f]' : '')
            }
          >
            {a.icon}
            {a.bar && <Bar split={a.split} />}
            {a.open && <span className="absolute inset-x-0 bottom-0 h-[3px] bg-[#76b4ec]" />}
          </span>
        ))}
      </div>
      <div className="ml-auto flex items-center text-[17px] tracking-[-0.4px] whitespace-nowrap">
        <Art className="size-[30px]" box="0 0 30 30"><path fill="#f7a934" d="M12 0c5 5 6 11 2 16-4 2-10 1-13-2 7 0 12-6 11-14z" /><path fill="#b7d2f8" d="M0 22c0-4 3-6 6-6 1-4 4-6 8-6 5 0 8 3 9 7 4 0 7 3 7 6s-2 6-6 6H6c-4 0-6-3-6-7z" /><path fill="#1d78ec" d="M13 17c3 4 4 6 4 8a4 4 0 0 1-8 0c0-2 1-4 4-8zM24 17c3 5 5 7 5 9a4 4 0 0 1-8 0c0-2 1-5 3-9z" /></Art>
        <span className="ml-[10px] w-[48px]">26°C</span>
        <span className="w-[91px]">Mưa rào</span>
        <span className="flex w-[30px] justify-center"><Line className="size-4"><path d="M1 15l9-9 9 9" /></Line></span>
        <span className="flex w-[30px] justify-center"><Art className="size-5"><path fill="#999" d="M4 9c1-5 9-6 11-1l-9 8z" /><path fill="#fff" d="M3.500 17a3.700 3.700 0 0 1 0-7.500C6 7.500 9 9 10.500 10.500c1-1.200 4-1.500 5 .5 6 .3 5.500 6 1.500 6z" /></Art></span>
        <span className="relative flex w-[30px] justify-center"><Line className="size-5" sw={1.500}><path d="M1 4l18-3v18L1 17zM13 7.500C11.500 5 6 6 6 10M13 5v3h-3M7 12.500c1.500 2.500 6 1.500 6.500-2M7 15v-3h3" /></Line><i className="absolute top-[12px] left-[16px] size-[9px] rounded-full bg-[#ff8c00]" /></span>
        <span className="flex w-[30px] justify-center"><Line className="size-5" sw={1.400}><path d="M4 5.500h14v9.500H4zM18.500 8.500h1v3h-1" /><path fill="currentColor" d="M6.500 8h6v5h-6z" /><path d="M1 3v2.500a1.500 1.500 0 0 0 3 0V3M2.500 7v5" /></Line></span>
        <span className="flex w-[31px] justify-center"><Line className="size-5" sw={1.400}><rect x="3.500" y="5" width="9" height="10" rx="1.500" /><path d="M12.500 9L16 7v6l-3.500-2M5 1.500c3-1.300 6-1.300 9 0M5 18.500c3 1.300 6 1.300 9 0" /></Line></span>
        <span className="flex w-[29px] justify-center"><Line className="size-5" sw={1.300}><path d="M2 18C2 9 8 2.500 17 2.500M6 18C6 11.500 10.500 6.500 17 6.500M10 18c0-4.500 3-7.500 7-7.500M13.500 18c0-2.500 1.500-4 3.500-4" /><circle cx="16.500" cy="17.500" r="1" fill="currentColor" /></Line></span>
        <span className="flex w-[28px] justify-center"><Line className="size-[19px]" sw={1.400}><path d="M1 7h3.500L9 3v14l-4.500-4H1zM13 7l6 6M19 7l-6 6" /></Line></span>
        <span className="flex w-[43px] justify-center"><Line className="size-[22px]" sw={1.300}><path d="M4 18L15 3c2-3 5-1 3 2L8 17l-4 1zM6 10c-6 1-6 8-2 8M11 13c2-2 4-2 3 0s1 2 4-1" /></Line></span>
        <span className="ml-[5px] w-[48px] pt-[2px] text-[15px]">ENG</span>
        <span className="flex w-[74px] flex-col items-center text-[15px] leading-[22px] tracking-[-0.5px]"><span>10:47 CH</span><span>19/07/2023</span></span>
        <span className="relative ml-[23px] flex w-[46px]">
          <Art className="size-[24px]" box="0 0 20 20"><path fill="#fff" d="M0 1h17v14H9l-4 4v-4H0z" /><path stroke="#182a4a" strokeWidth="1.300" d="M3 5h11M3 8.200h11M3 11.400h8" /></Art>
          <span className="absolute top-[11px] left-[9px] flex size-[21px] items-center justify-center rounded-full border border-[#8a8f98] bg-[#2e3238] text-[13px] font-bold">3</span>
        </span>
        <span className="h-[50px] w-px bg-[#6c7688]" />
        <span className="w-[5px]" />
      </div>
    </footer>
  );
}

export default function App() {
  return (
    <div className="flex h-[1080px] w-[1920px] flex-col overflow-hidden bg-[#f8f8f8] font-['Open_Sans','Noto_Sans',sans-serif]">
      <div className="shrink-0 bg-[#3b3b3b]">
        <TabStrip />
        <Toolbar />
        <Bookmarks />
      </div>
      <Header />
      <div className="flex min-h-0 flex-1">
        <Sidebar />
        <Main />
      </div>
      <Taskbar />
    </div>
  );
}
